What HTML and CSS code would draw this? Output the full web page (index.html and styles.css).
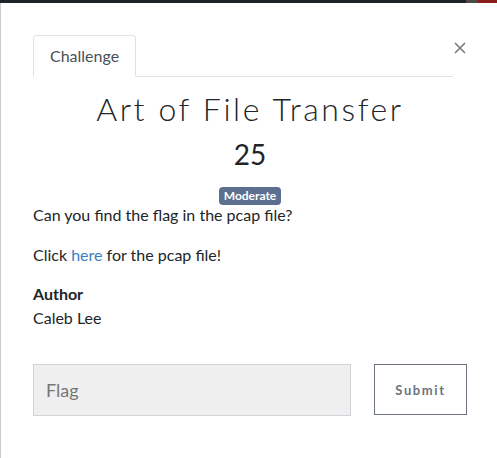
FILE: index.html
```html
<!DOCTYPE html>
<html lang="en">
<head>
<meta charset="utf-8">
<title>Art of File Transfer</title>
<link rel="stylesheet" href="styles.css">
</head>
<body>
<div class="topbar"><span class="tb-gray"></span><span class="tb-red"></span></div>
<div class="modal">
  <div class="header">
    <ul class="tabs">
      <li class="tab">Challenge</li>
    </ul>
    <button class="close" aria-label="Close">
      <svg width="12" height="12" viewBox="0 0 12 12"><path d="M1 1 L11 11 M11 1 L1 11" stroke="#7a7a7a" stroke-width="1.6" fill="none"/></svg>
    </button>
  </div>
  <h2 class="name">Art of File Transfer</h2>
  <h3 class="value">25</h3>
  <div class="tags"><span class="badge">Moderate</span></div>
  <p class="desc">Can you find the flag in the pcap file?</p>
  <p class="desc">Click <a href="#">here</a> for the pcap file!</p>
  <div class="author">
    <div class="author-label">Author</div>
    <div class="author-name">Caleb Lee</div>
  </div>
  <form class="submit-row">
    <input class="flag" type="text" placeholder="Flag">
    <button class="submit" type="button">Submit</button>
  </form>
</div>
</body>
</html>
```
FILE: styles.css
```css
html, body {
  margin: 0;
  padding: 0;
  background: #fff;
}
body {
  font-family: "Lato", "Liberation Sans", sans-serif;
  color: #212529;
  font-size: 16px;
  line-height: 24px;
  height: 458px;
  overflow: hidden;
  font-variant-ligatures: common-ligatures;
}
.topbar {
  height: 3px;
  background: #1f2326;
  display: flex;
  justify-content: flex-end;
}
.tb-gray {
  width: 12px;
  background: #4a4a4a;
}
.tb-red {
  width: 19px;
  background: #8a1c1c;
}
.modal {
  border-left: 1px solid #c9c9c9;
  padding: 32px 30px 0 32px;
  height: 455px;
  box-sizing: border-box;
}
.header {
  display: flex;
  align-items: flex-start;
}
.tabs {
  list-style: none;
  margin: 0;
  padding: 0;
  flex: 1;
  display: flex;
  border-bottom: 1px solid #dee2e6;
}
.tab {
  border: 1px solid #dee2e6;
  border-bottom-color: #fff;
  border-radius: 4px 4px 0 0;
  padding: 8px 16px;
  margin-bottom: -1px;
  color: #495057;
  font-size: 16px;
  line-height: 24px;
}
.close {
  border: 0;
  background: transparent;
  padding: 0;
  margin: 6px 0 0 0;
  width: 14px;
  height: 14px;
  display: flex;
  align-items: center;
  justify-content: center;
}
.name {
  font-family: "Lato", sans-serif;
  font-weight: 300;
  font-size: 32px;
  line-height: 38px;
  letter-spacing: 2.6px;
  text-align: center;
  margin: 13px 0 9px;
  color: #212529;
}
.value {
  font-family: "Lato", sans-serif;
  font-weight: 400;
  font-size: 28px;
  line-height: 34px;
  text-align: center;
  margin: 0 0 14px;
}
.tags {
  text-align: center;
  height: 18px;
  line-height: 18px;
}
.badge {
  display: inline-block;
  background: #5b6f8f;
  color: #fff;
  font-weight: 700;
  font-size: 12px;
  line-height: 18px;
  padding: 0 5px;
  border-radius: 4px;
}
.desc {
  margin: 0 0 16px;
}
.desc a {
  color: #3a7dc0;
  text-decoration: none;
}
.author {
  margin-top: -1px;
}
.author-label {
  font-weight: 700;
}
.submit-row {
  display: flex;
  gap: 23px;
  margin-top: 34px;
}
.flag {
  width: 318px;
  height: 52px;
  box-sizing: border-box;
  background: #efefef;
  border: 1px solid #ced4da;
  padding: 0 12px;
  font-family: "Lato", sans-serif;
  font-size: 18px;
  color: #495057;
  outline: none;
}
.flag::placeholder {
  color: #767676;
}
.submit {
  width: 93px;
  height: 51px;
  box-sizing: border-box;
  background: #fff;
  border: 1px solid #6c757d;
  color: #6c757d;
  font-family: "Lato", sans-serif;
  font-weight: 700;
  font-size: 13px;
  letter-spacing: 1.6px;
  padding: 0;
}
```
